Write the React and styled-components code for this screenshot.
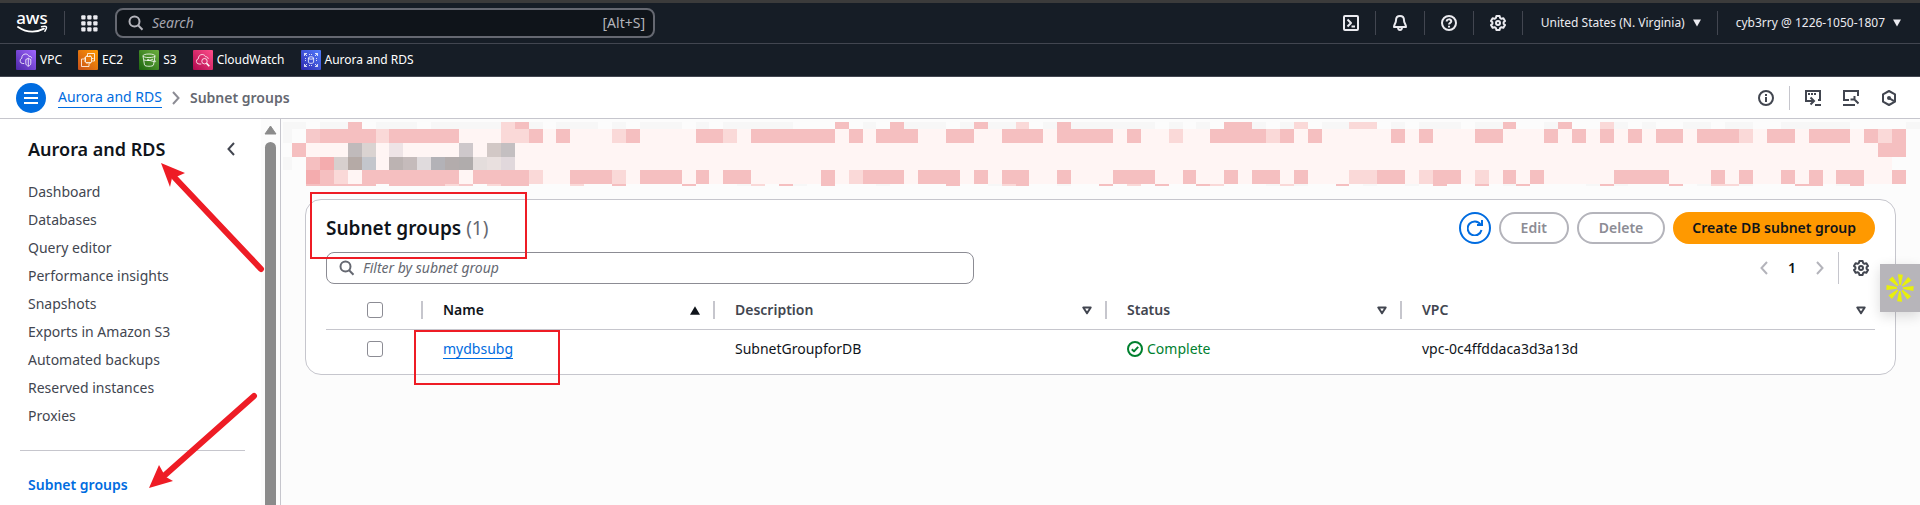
import React from "react";
import styled, { createGlobalStyle, css } from "styled-components";

const Global = createGlobalStyle`
  *, *::before, *::after { box-sizing: border-box; }
  body { margin: 0; background: #fcfcfc; }
  body, button, input {
    font-family: "Noto Sans", "Open Sans", sans-serif;
    font-size: 14px;
    line-height: 20px;
    color: #0f141a;
  }
  button { border: 0; padding: 0; background: none; cursor: pointer; }
  svg { display: block; flex: none; }
  ul, h1, h2 { margin: 0; padding: 0; list-style: none; }
`;

/* ---------- page frame ---------- */

const Page = styled.div`
  display: flex;
  flex-direction: column;
  min-height: 100vh;
`;

const Body = styled.div`
  display: flex;
  flex: 1;
`;

/* ---------- console header ---------- */

const TopBar = styled.header`
  display: flex;
  align-items: center;
  height: 44px;
  padding: 0 19px 0 16px;
  border-top: 3px solid #3b3b3b;
  border-bottom: 1px solid #424650;
  background: #161d26;
  color: #ebebf0;
`;

const Rule = styled.span`
  flex: none;
  width: 1px;
  height: ${(p) => p.$h || 24}px;
  margin: 0 ${(p) => p.$gap || 0}px;
  background: ${(p) => (p.$light ? "#c6c6cd" : "#424650")};
`;

const GlobalSearch = styled.label`
  display: flex;
  align-items: center;
  gap: 8px;
  flex: 0 1 540px;
  height: 30px;
  padding: 0 8px 0 11px;
  border: 2px solid #656871;
  border-radius: 8px;
  background: #0f141a;
  color: #b4b4bb;
  margin-left: 17px;
`;

const SearchInput = styled.input`
  flex: 1;
  min-width: 0;
  padding: 0;
  border: 0;
  outline: 0;
  background: transparent;
  &::placeholder {
    color: ${(p) => (p.$dark ? "#a4a4ad" : "#656871")};
    font-style: italic;
    opacity: 1;
  }
`;

const Spacer = styled.span`
  flex: 1;
`;

const IconButton = styled.button`
  display: flex;
  align-items: center;
  justify-content: center;
  width: ${(p) => p.$w || 16}px;
  height: 20px;
  color: ${(p) => (p.$dark ? "#ebebf0" : "#424650")};
`;

const MenuButton = styled.button`
  display: flex;
  align-items: center;
  gap: 8px;
  padding-left: 2px;
  font-size: 12px;
  color: #ebebf0;
  white-space: nowrap;
`;

const Favorites = styled.nav`
  display: flex;
  align-items: center;
  gap: 16px;
  height: 33px;
  padding: 0 16px;
  border-bottom: 1px solid #424650;
  background: #161d26;
`;

const Favorite = styled.a`
  display: flex;
  align-items: center;
  gap: 4px;
  font-size: 12px;
  color: #fff;
  text-decoration: none;
`;

/* ---------- breadcrumb bar ---------- */

const CrumbBar = styled.div`
  display: flex;
  align-items: center;
  height: 42px;
  padding: 0 23px 0 16px;
  border-bottom: 1px solid #c6c6cd;
  background: #fff;
`;

const RoundMenu = styled.button`
  display: flex;
  align-items: center;
  justify-content: center;
  width: 30px;
  height: 30px;
  border-radius: 50%;
  background: #006ce0;
  color: #fff;
`;

const Crumbs = styled.nav`
  display: flex;
  align-items: center;
  gap: 10px;
  margin-left: 12px;
  color: #8c8c94;
`;

const Link = styled.a`
  color: #006ce0;
  text-decoration: none;
  border-bottom: 1px solid #006ce0;
`;

const Current = styled.span`
  font-weight: 600;
  color: #656871;
`;

const Tools = styled.div`
  display: flex;
  align-items: center;
  margin-left: auto;
  gap: ${(p) => p.$gap}px;
`;

/* ---------- side navigation ---------- */

const Side = styled.aside`
  position: relative;
  display: flex;
  flex: none;
  width: 281px;
  border-right: 1px solid #c6c6cd;
  background: #fff;
`;

const SideContent = styled.div`
  flex: 1;
  padding: 17px 16px 0 20px;
`;

const SideHead = styled.div`
  display: flex;
  align-items: center;
  justify-content: space-between;
  height: 26px;
  margin-bottom: 16px;
  padding: 0 8px;
`;

const SideTitle = styled.h2`
  font-size: 18px;
  font-weight: 600;
  line-height: 24px;
`;

const SideLink = styled.a`
  display: block;
  padding: 4px 8px;
  color: #424650;
  text-decoration: none;
  ${(p) =>
    p.$active &&
    css`
      font-weight: 600;
      color: #006ce0;
    `}
`;

const SideRule = styled.hr`
  height: 1px;
  margin: 20px 0;
  border: 0;
  background: #c6c6cd;
`;

const ScrollTrack = styled.div`
  display: flex;
  flex-direction: column;
  align-items: center;
  gap: 7px;
  width: 19px;
  padding: 6px 3px 0;
  background: #fcfcfc;
`;

const ScrollThumb = styled.span`
  flex: 1;
  width: 11px;
  border-radius: 6px 6px 0 0;
  background: #8b8b8b;
`;

/* ---------- main panel ---------- */

const Main = styled.main`
  flex: 1;
  min-width: 0;
  padding-top: 3px;
  padding-left: 2px;
`;

const Banner = styled.svg`
  width: 100%;
  height: 64px;
`;

const Card = styled.section`
  margin: 13px 24px 24px 22px;
  padding: 12px 20px 5px;
  border: 1px solid #c6c6cd;
  border-radius: 16px;
  background: #fff;
`;

const CardRow = styled.div`
  display: flex;
  align-items: center;
  height: 32px;
  margin-bottom: 8px;
`;

const Marked = styled.span`
  position: relative;
`;

const Title = styled.h1`
  font-size: 19px;
  font-weight: 600;
  line-height: 24px;
  white-space: nowrap;
`;

const Count = styled.span`
  font-weight: 400;
  color: #656871;
`;

const Button = styled.button`
  height: 32px;
  padding: 0 20px;
  border: 2px solid #b4b4bb;
  border-radius: 20px;
  font-weight: 600;
  color: #8c8c94;
  white-space: nowrap;
  ${(p) =>
    p.$primary &&
    css`
      padding: 0 17px;
      border-color: #ff9900;
      background: #ff9900;
      color: #0f141a;
    `}
  ${(p) =>
    p.$round &&
    css`
      display: flex;
      align-items: center;
      justify-content: center;
      width: 32px;
      padding: 0;
      border-color: #006ce0;
      color: #006ce0;
    `}
`;

const Filter = styled.label`
  display: flex;
  align-items: center;
  gap: 8px;
  flex: 0 1 648px;
  height: 32px;
  padding: 0 12px;
  border: 1px solid #8c8c94;
  border-radius: 8px;
  color: #656871;
`;

const PageNumber = styled.button`
  width: 20px;
  font-weight: 600;
`;

const Muted = styled.span`
  color: #b4b4bb;
`;

const Settings = styled.span`
  display: flex;
  align-items: center;
  gap: 14px;
  padding-right: 6px;
`;

const Table = styled.table`
  width: 100%;
  table-layout: fixed;
  border-collapse: collapse;
`;

const Th = styled.th`
  height: 37px;
  padding: 0;
  border-bottom: 1px solid #c6c6cd;
  text-align: left;
  font-weight: 600;
  color: #424650;
`;

const ThInner = styled.div`
  display: flex;
  align-items: center;
  justify-content: ${(p) => (p.$check ? "flex-end" : "space-between")};
  height: 18px;
  padding-left: 20px;
  padding-right: ${(p) => (p.$check ? 38 : p.$last ? 9 : 13)}px;
  border-right: ${(p) => (p.$last ? 0 : 2)}px solid #c6c6cd;
  color: ${(p) => (p.$sorted ? "#0f141a" : "inherit")};
`;

const Td = styled.td`
  height: 40px;
  padding: 0 20px;
`;

const CheckCell = styled.td`
  padding: 0 0 0 41px;
`;

const Check = styled.input`
  display: block;
  appearance: none;
  width: 16px;
  height: 16px;
  margin: 0;
  border: 1px solid #8c8c94;
  border-radius: 3px;
  background: #fff;
`;

const Status = styled.span`
  display: flex;
  align-items: center;
  gap: 4px;
  color: #00802f;
`;

/* ---------- annotations and floating button ---------- */

const RedBox = styled.span`
  position: absolute;
  top: ${(p) => p.$top}px;
  left: ${(p) => p.$left}px;
  width: ${(p) => p.$w}px;
  height: ${(p) => p.$h}px;
  border: 2px solid #ee1c25;
  pointer-events: none;
`;

const Arrows = styled.svg`
  position: absolute;
  top: 0;
  left: 0;
  z-index: 1;
  pointer-events: none;
`;

const FloatButton = styled.button`
  position: fixed;
  top: 264px;
  right: 0;
  display: flex;
  align-items: center;
  justify-content: center;
  width: 40px;
  height: 48px;
  background: #b7b5ba;
  box-shadow: 0 4px 12px rgba(0, 0, 0, 0.14);
`;

/* ---------- icons ---------- */

const Icon = ({ size = 16, width = 2, children }) => (
  <svg width={size} height={size} viewBox="0 0 16 16" fill="none" stroke="currentColor" strokeWidth={width} strokeLinejoin="round" aria-hidden="true">
    {children}
  </svg>
);

const SearchIcon = () => (
  <Icon>
    <circle cx="6.500" cy="6.500" r="5" />
    <path d="M10.100 10.300 14.500 14.700" />
  </Icon>
);

const GearIcon = () => (
  <Icon>
    <path d="M6.4 1h3.2l.5 2 1.3.8 2-.6 1.6 2.8L13.600 7.300v1.400l1.400 1.300-1.600 2.800-2-.6-1.300.8-.5 2H6.400l-.5-2-1.300-.8-2 .6L1 10l1.400-1.300V7.300L1 6l1.600-2.800 2 .6L5.900 3z" />
    <circle cx="8" cy="8" r="2" />
  </Icon>
);

const Caret = () => (
  <svg width="8" height="8" viewBox="0 0 8 8" fill="currentColor" aria-hidden="true">
    <path d="M0 .5h8l-4 7z" />
  </svg>
);

const Chevron = ({ left }) => (
  <svg width="8" height="14" viewBox="0 0 8 14" fill="none" stroke="currentColor" strokeWidth="2" aria-hidden="true">
    <path d={left ? "M7 1 1.500 7 7 13" : "M1 1l5.500 6L1 13"} />
  </svg>
);

const SortIcon = ({ up }) => (
  <svg width="10" height="9" viewBox="0 0 10 9" aria-hidden="true">
    {up ? (
      <path d="M5 .3 10 8.700H0z" fill="currentColor" />
    ) : (
      <path d="M1.300 1.500h7.400L5 7.300z" fill="none" stroke="currentColor" strokeWidth="2" strokeLinejoin="round" />
    )}
  </svg>
);

const AwsLogo = () => (
  <svg width="32" height="36" viewBox="0 0 32 36" role="img" aria-label="aws">
    <text x="16" y="19" textAnchor="middle" fontFamily="Noto Sans, sans-serif" fontSize="17" fontWeight="500" fill="#fff">
      aws
    </text>
    <path d="M2 22c8.500 5.600 18 5.800 26 1.600" fill="none" stroke="#fff" strokeWidth="1.800" strokeLinecap="round" />
    <path d="M25.500 21.700c2.500-.6 4.500-.5 4.900.1.300.7-.4 2.800-1.600 4.500" fill="none" stroke="#fff" strokeWidth="1.400" strokeLinecap="round" />
  </svg>
);

const GridIcon = () => (
  <svg width="17" height="17" viewBox="0 0 17 17" fill="currentColor" aria-hidden="true">
    {[0, 6, 12].map((y) => [0, 6, 12].map((x) => <rect key={`${x}-${y}`} x={x + 0.25} y={y + 0.25} width="4.300" height="4.300" rx="1" />))}
  </svg>
);

const serviceArt = {
  VPC: (
    <>
      <path d="M8.200 13.500H6.500a2.700 2.700 0 0 1-.7-5.200C5.600 5.800 7.300 4 9.500 4c1.700 0 2.800.9 3.400 2.300 1.500-.2 2.700.6 2.800 2" />
      <path d="M9.800 9.500c1-.4 1.800-.8 2.500-1.300.8.5 1.500.9 2.500 1.300v3.700c0 1.500-1 2.400-2.500 3.100-1.500-.7-2.500-1.600-2.500-3.100zM12.300 8.300v7.700" />
    </>
  ),
  EC2: (
    <>
      <rect x="7.500" y="6.500" width="6" height="6" rx=".5" />
      <path d="M8 9H3.500v7.500H11V13M9.500 6V3.500h7V11H14M9 5v1.500M12 5v1.500M6 8h1.500M6 11h1.500M14 8.500h1.500M9 12.500V14M12 12.500V14" />
    </>
  ),
  S3: (
    <>
      <ellipse cx="10" cy="5.800" rx="6" ry="1.800" />
      <path d="M4 6l1.500 9c.3 1.700 8.700 1.700 9 0L16 6M9 10l6.500 1.700c1.500.4 1.500-.7-.2-1.700M5 10c3.500 1 6 .5 9-.8" />
      <circle cx="9" cy="10" r=".6" />
    </>
  ),
  CloudWatch: (
    <>
      <path d="M8.300 14H6a2.700 2.700 0 0 1-.6-5.300C5.300 6.200 7 4.500 9.200 4.500c1.700 0 2.800.9 3.300 2.200 1.500-.1 2.600.7 2.800 2.200" />
      <circle cx="11.500" cy="11.200" r="2.700" />
      <path d="M13.500 13.200l2.800 3" strokeWidth="1.600" />
    </>
  ),
  "Aurora and RDS": (
    <>
      <ellipse cx="10" cy="8" rx="2.600" ry="1.200" />
      <path d="M7.400 8v4.200c0 1.600 5.200 1.600 5.200 0V8M3.500 6V3.500H6M3.500 3.500 6 6M14 3.500h2.500V6M16.500 3.500 14 6M3.500 14v2.500H6M3.500 16.500 6 14M16.500 14v2.500H14M16.500 16.500 14 14" />
      <path d="M8 4.500h4M8 15.500h4M4.500 8v4M15.500 8v4" strokeDasharray="1 1" />
    </>
  ),
};

const favorites = [
  ["VPC", "#4d27a8", "#a166ff"],
  ["EC2", "#c8511b", "#ff9900"],
  ["S3", "#1b660f", "#6cae3e"],
  ["CloudWatch", "#b0084d", "#ff4f8b"],
  ["Aurora and RDS", "#2e27ad", "#527fff"],
];

const ServiceIcon = ({ name, from, to }) => {
  const id = `fill-${name.replace(/ /g, "")}`;
  return (
    <svg width="20" height="20" viewBox="0 0 20 20" aria-hidden="true">
      <defs>
        <linearGradient id={id} x1="0" y1="1" x2="1" y2="0">
          <stop offset="0" stopColor={from} />
          <stop offset="1" stopColor={to} />
        </linearGradient>
      </defs>
      <rect width="20" height="20" rx="1" fill={`url(#${id})`} />
      <g fill="none" stroke="#fff" strokeWidth=".8" strokeLinejoin="round">
        {serviceArt[name]}
      </g>
    </svg>
  );
};

/* ---------- censored banner mosaic ---------- */

const tones = { s: "#f5bfc0", d: "#f4acae", l: "#fad9d8", g: "#f7f7f7", c: "#fff5f4", m: "#f6c9ca", w: "#fcfcfc" };

/* y, height, then "first-last:tone" runs of mosaic columns */
const mosaic = [
  [0, 7, "-2--1:g 1-2:g 3:s 5-7:g 9-13:g 14:l 15:s 16:g 18-20:g 22:g 24-26:g 28:g 30-34:g 38:s 40:g 42:s 43-45:g 47:g 48:s 49-50:g 51:l 53:g 54:s 55-60:g 62:g 64:g 66-67:s 68:g 70:g 71:l 73-74:g 75-76:l 78:g 80-82:g 84-85:g 86:s 89:g 90:s 93:l 94:g 96:g 99-100:g 102-103:g 106-110:g 115:g"],
  [7, 14, "-2:g 0-114:c 0:m 1-4:s 5:l 6-10:s 14-15:l 16:s 18:s 22:l 23:s 28-29:s 30:l 32-37:s 39:s 41-43:s 46-47:s 50-52:s 54-57:s 59:s 62:l 65-68:s 69:l 70:s 72:s 78:s 80:s 84-85:s 89:s 91:s 93:s 95:s 97-98:s 100-102:s 103:l 105-106:s 108-110:s 112:s 113:l 114:s"],
  [21, 14, "0-112:c -1:s 3:#c0babb 4:#dad3d1 6:#eee4e6 11:#cec8cb 13:#d2c8c6 14:#c4bfc1 113-114:s"],
  [35, 13, "-2:g 0-113:c 0:s 1:d 2:#d7cfce 3:#b5aaa6 4:#c3c6cc 6:#bcb3b2 7:#c5bbbb 8:#e0dbdd 9:#b3b2b7 10:#b3acac 11:#b0acac 12:#e4dddc 13:#e9e0df 14:#e1d8dc"],
  [48, 14, "0-114:c 0:d 1:s 2:l 4-10:s 12-15:s 16:l 19-21:s 22:l 24-26:s 28:s 30-31:s 37:s 39:l 40-42:s 44-46:s 48:s 50-51:s 54:s 58-60:s 63:s 66:s 68-69:s 71:s 75-76:l 77-78:s 80:l 81-82:s 84:l 86:s 88:s 94-97:s 101:s 103:s 106:s 108:s 110-111:s 114:s"],
  [62, 2, "0-4:s 6-9:s 10:l 11:m 13:l 14-15:s 19:l 22:s 27:s 31:g 32:l 34:s 35:g 37:s 41:g 46:s 49:g 50:l 51:s 54:g 57:s 59:l 61:s 64:s 65:l 69:g 70:l 71:g 74:s 76:g 79:g 81:s 84:s 86:g 87:s 92:g 93:s 94:g 98:s 100:g 101-102:l 103:g 107-108:s 110:g 111:s"],
];

const columnX = (k) => Math.max(0, Math.round(23 + (k * 1600) / 115));

const Mosaic = () => (
  <Banner viewBox="0 0 1637 64" preserveAspectRatio="none" shapeRendering="crispEdges" aria-hidden="true">
    {mosaic.map(([y, h, runs]) =>
      runs.split(" ").map((run) => {
        const [, first, last, tone] = run.match(/^(-?\d+)(?:-(-?\d+))?:(.+)$/);
        const x = columnX(Number(first));
        const end = columnX(Number(last ?? first) + 1);
        return <rect key={`${y}-${run}`} x={x} y={y} width={end - x} height={h} fill={tones[tone] || tone} />;
      })
    )}
  </Banner>
);

const navItems = [
  "Dashboard",
  "Databases",
  "Query editor",
  "Performance insights",
  "Snapshots",
  "Exports in Amazon S3",
  "Automated backups",
  "Reserved instances",
  "Proxies",
];

export default function App() {
  return (
    <Page>
      <Global />
      <TopBar>
        <AwsLogo />
        <Rule $gap={16} />
        <IconButton $dark $w={17} aria-label="Services"><GridIcon /></IconButton>
        <GlobalSearch>
          <SearchIcon />
          <SearchInput $dark type="search" placeholder="Search" aria-label="Search" />
          <span>[Alt+S]</span>
        </GlobalSearch>
        <Spacer />
        <Tools $gap={16}>
          <IconButton $dark aria-label="CloudShell">
            <Icon><rect x="1" y="1" width="14" height="14" rx="1" /><path d="M4.500 4.500 8 8l-3.500 3.500M8.500 11.500H12" /></Icon>
          </IconButton>
          <Rule />
          <IconButton $dark aria-label="Notifications">
            <Icon><path d="M8 1C5.500 1 4 2.800 4 5.200 4 8.500 2 9 2 12h12c0-3-2-3.500-2-6.800C12 2.800 10.500 1 8 1zM6 12c0 4 4 4 4 0" /></Icon>
          </IconButton>
          <Rule />
          <IconButton $dark aria-label="Help">
            <Icon><circle cx="8" cy="8" r="7" /><path d="M5.700 6.500C5.700 3.700 10.300 3.700 10.300 6.300 10.300 8 8 7.800 8 9.600M8 10.800v1.700" /></Icon>
          </IconButton>
          <Rule />
          <IconButton $dark aria-label="Settings"><GearIcon /></IconButton>
          <Rule />
          <MenuButton>United States (N. Virginia)<Caret /></MenuButton>
          <Rule />
          <MenuButton>cyb3rry @ 1226-1050-1807<Caret /></MenuButton>
        </Tools>
      </TopBar>

      <Favorites aria-label="Favorites">
        {favorites.map(([name, from, to]) => (
          <Favorite key={name} href="#">
            <ServiceIcon name={name} from={from} to={to} />
            {name}
          </Favorite>
        ))}
      </Favorites>

      <CrumbBar>
        <RoundMenu aria-label="Open navigation">
          <Icon><path d="M1 3h14M1 8h14M1 13h14" /></Icon>
        </RoundMenu>
        <Crumbs aria-label="Breadcrumb">
          <Link href="#">Aurora and RDS</Link>
          <Chevron />
          <Current>Subnet groups</Current>
        </Crumbs>
        <Tools $gap={22}>
          <Tools $gap={15}>
            <IconButton aria-label="Info">
              <Icon><circle cx="8" cy="8" r="7" /><path d="M8 7v5M8 4v2" /></Icon>
            </IconButton>
            <Rule $light />
            <IconButton aria-label="Shell">
              <Icon><path d="M13 10h2V1H1v10h7M5.500 7.500 9 11l-3.500 3.500M10 15h6M3 4h2M6 4h2M9 4h2" strokeLinejoin="miter" /></Icon>
            </IconButton>
          </Tools>
          <IconButton aria-label="Developer tools">
            <Icon><path d="M6 10H1V1h14v5M0 15h12M15.500 13.500 11 9M11.500 6v3.500H7.500" strokeLinejoin="miter" /></Icon>
          </IconButton>
          <IconButton aria-label="Resources">
            <Icon><path d="M8 1 14 4.300v7.400L8 15l-6-3.300V4.300z" /><circle cx="8" cy="8" r="2" fill="currentColor" stroke="none" /><path d="M8 8l5 3.200" /></Icon>
          </IconButton>
        </Tools>
      </CrumbBar>

      <Body>
        <Side>
          <SideContent>
            <SideHead>
              <SideTitle>Aurora and RDS</SideTitle>
              <IconButton $w={12} aria-label="Close navigation"><Chevron left /></IconButton>
            </SideHead>
            <ul>
              {navItems.map((item) => (
                <li key={item}><SideLink href="#">{item}</SideLink></li>
              ))}
            </ul>
            <SideRule />
            <SideLink $active href="#">Subnet groups</SideLink>
          </SideContent>
          <ScrollTrack>
            <svg width="13" height="10" viewBox="0 0 13 10" aria-hidden="true">
              <path d="M6.500 1 12 9H1z" fill="#8b8b8b" stroke="#8b8b8b" strokeLinejoin="round" />
            </svg>
            <ScrollThumb />
          </ScrollTrack>
          <Arrows width="281" height="386" viewBox="0 119 281 386" aria-hidden="true">
            <g stroke="#ee1c25" strokeWidth="6" strokeLinecap="round">
              <path d="M175 178 261 269M165 475l89-79" />
            </g>
            <path d="M161 163l24 10-9 4-4 1-2 9zM149 488l24-7-7-4-2-3-5-9z" fill="#ee1c25" />
          </Arrows>
        </Side>

        <Main>
          <Mosaic />
          <Card>
            <CardRow>
              <Marked>
                <Title>Subnet groups <Count>(1)</Count></Title>
                <RedBox $top={-24} $left={-16} $w={217} $h={67} />
              </Marked>
              <Tools $gap={8}>
                <Button $round aria-label="Refresh">
                  <Icon><path d="M14.500 10A7 7 0 1 1 13.500 4.500M15 0v5h-5" strokeLinejoin="miter" /></Icon>
                </Button>
                <Button>Edit</Button>
                <Button>Delete</Button>
                <Button $primary>Create DB subnet group</Button>
              </Tools>
            </CardRow>
            <CardRow>
              <Filter>
                <SearchIcon />
                <SearchInput type="search" placeholder="Filter by subnet group" aria-label="Filter by subnet group" />
              </Filter>
              <Tools $gap={10}>
                <IconButton aria-label="Previous page"><Muted><Chevron left /></Muted></IconButton>
                <PageNumber>1</PageNumber>
                <IconButton aria-label="Next page"><Muted><Chevron /></Muted></IconButton>
                <Settings>
                  <Rule $light $h={32} />
                  <IconButton aria-label="Preferences"><GearIcon /></IconButton>
                </Settings>
              </Tools>
            </CardRow>
            <Table>
              <colgroup>
                <col width="97" />
                <col width="292" />
                <col width="392" />
                <col width="295" />
                <col />
              </colgroup>
              <thead>
                <tr>
                  <Th><ThInner $check><Check type="checkbox" aria-label="Select all" /></ThInner></Th>
                  <Th><ThInner $sorted>Name<SortIcon up /></ThInner></Th>
                  <Th><ThInner>Description<SortIcon /></ThInner></Th>
                  <Th><ThInner>Status<SortIcon /></ThInner></Th>
                  <Th><ThInner $last>VPC<SortIcon /></ThInner></Th>
                </tr>
              </thead>
              <tbody>
                <tr>
                  <CheckCell><Check type="checkbox" aria-label="Select mydbsubg" /></CheckCell>
                  <Td>
                    <Marked>
                      <Link href="#">mydbsubg</Link>
                      <RedBox $top={-9} $left={-29} $w={146} $h={55} />
                    </Marked>
                  </Td>
                  <Td>SubnetGroupforDB</Td>
                  <Td>
                    <Status>
                      <Icon><circle cx="8" cy="8" r="7" /><path d="M4.800 8.200 7 10.400l4.200-4.600" /></Icon>
                      Complete
                    </Status>
                  </Td>
                  <Td>vpc-0c4ffddaca3d3a13d</Td>
                </tr>
              </tbody>
            </Table>
          </Card>
        </Main>
      </Body>

      <FloatButton aria-label="Assistant">
        <svg width="28" height="28" viewBox="-14 -14 28 28" fill="#e8f00c" aria-hidden="true">
          {[0, 45, 90, 135, 180, 225, 270, 315].map((a) => (
            <path key={a} transform={`rotate(${a + 3})`} d="M-.8-3-2.800-13.500H2.200L.8-3z" />
          ))}
        </svg>
      </FloatButton>
    </Page>
  );
}
